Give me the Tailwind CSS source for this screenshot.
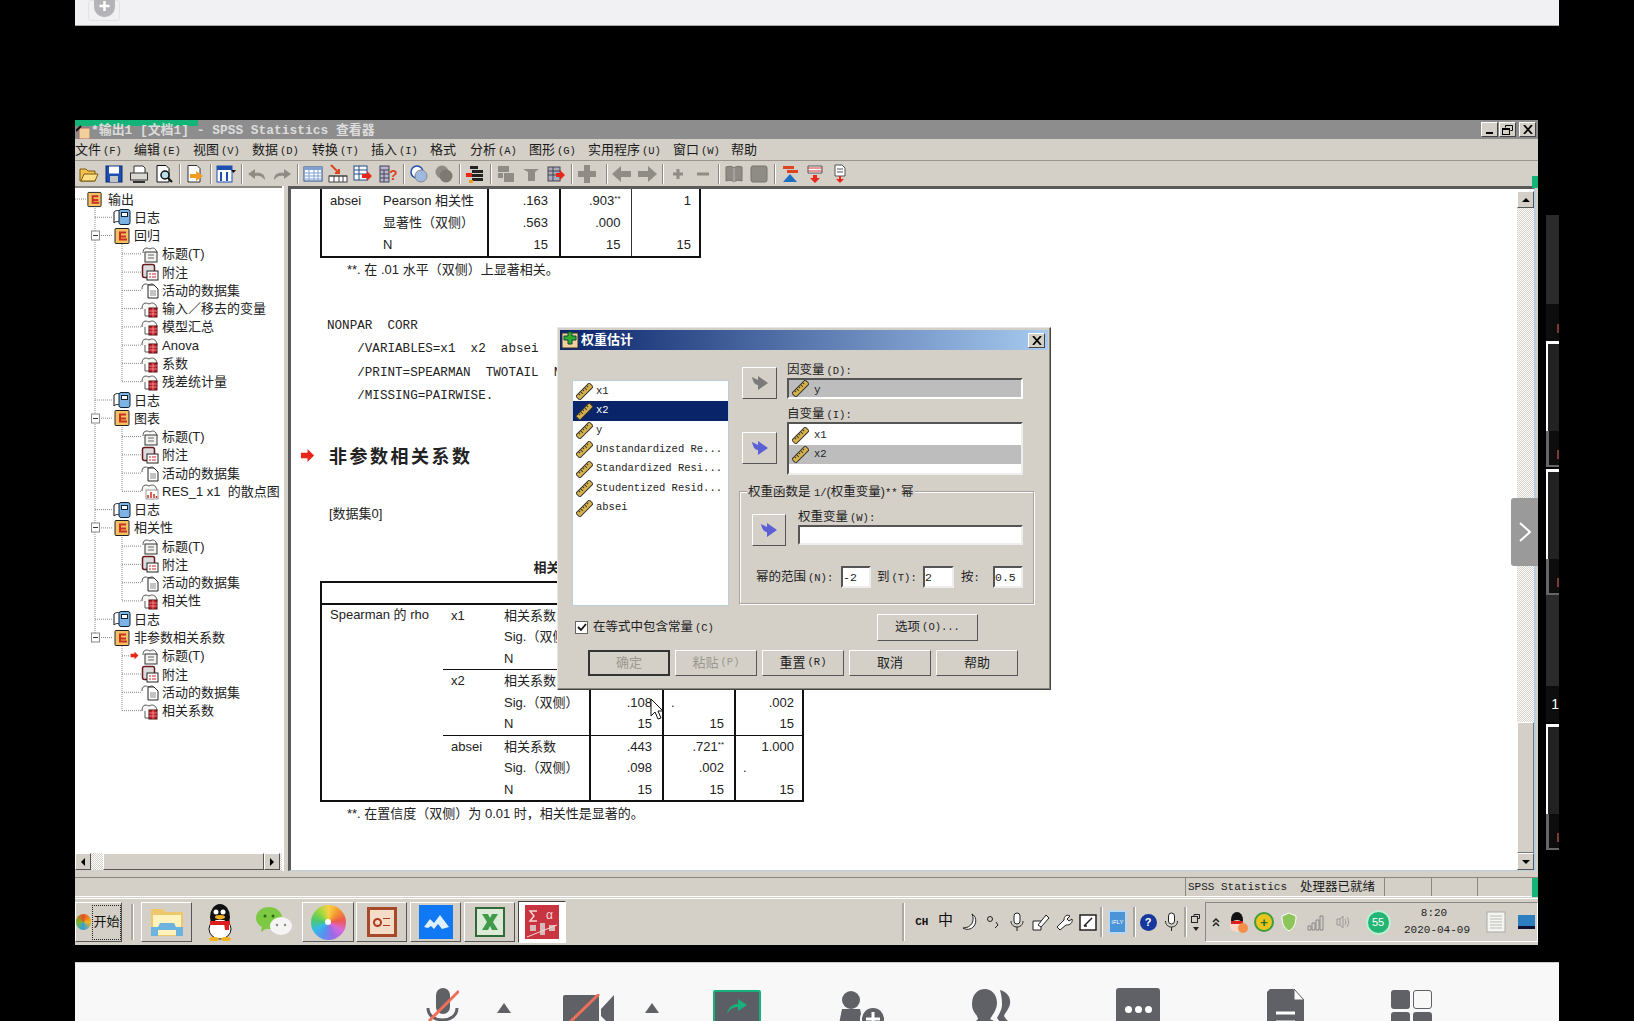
<!DOCTYPE html>
<html lang="zh">
<head>
  <meta charset="UTF-8" />
  <title>SPSS Statistics 查看器</title>
  <script src="https://cdn.jsdelivr.net/npm/@tailwindcss/browser@4"></script>
</head>
<body class="bg-black w-[1634px] h-[1021px] overflow-hidden font-['Liberation_Sans','Noto_Sans_CJK_SC',sans-serif] text-[13px] text-[#222]">

  <!-- shared icons -->
  <svg class="hidden">
    <symbol id="log" viewBox="0 0 18 18"><path d="M1 4c2-2 5-2 6 0v11c-1-2-4-2-6 0z" fill="#fff" stroke="#111"/><rect x="6" y="1.5" width="11" height="15" rx="2" fill="#7db4e6" stroke="#123"/><rect x="8.5" y="4.5" width="6" height="4" fill="#fff" stroke="#123"/></symbol>
    <symbol id="out" viewBox="0 0 18 18"><rect x="2" y="1.5" width="14" height="15" rx="1" fill="#f5c063" stroke="#222"/><path d="M6 4.500h7v2H8v2h5v2H8v1h6v2H6z" fill="#c8301f"/></symbol>
    <symbol id="ttl" viewBox="0 0 18 18"><path d="M2 8c0-5 3-6 7-4 3-2 6-1 7 4" fill="#fff" stroke="#555"/><rect x="4" y="7" width="12" height="10" fill="#f2f2ee" stroke="#333"/><path d="M7 10h6M7 13h6" stroke="#666"/></symbol>
    <symbol id="nte" viewBox="0 0 18 18"><rect x="1.500" y="1.500" width="12" height="13" rx="2" fill="#ddd" stroke="#6a1a1a" stroke-width="1.500"/><rect x="6" y="8" width="11" height="9" fill="#fff" stroke="#222"/><path d="M8 11h2M8 14h2M11 11h4M11 14h4" stroke="#c22"/></symbol>
    <symbol id="dst" viewBox="0 0 18 18"><path d="M1 8c0-5 3-6 7-4 3-2 5-1 6 2" fill="#fff" stroke="#555"/><path d="M7 4h6l4 4v9H7z" fill="#fff" stroke="#222"/><path d="M9 10h6M9 12h6M9 14h6" stroke="#888"/></symbol>
    <symbol id="tbl" viewBox="0 0 18 18"><path d="M1 9c0-6 3-7 7-5 3-2 7-1 8 4v1" fill="#f6f6f2" stroke="#555"/><path d="M4 9v7h5" fill="#fff" stroke="#555"/><rect x="8" y="8" width="8" height="9" fill="#c0202a" stroke="#511"/><path d="M8 11h8M8 14h8M12 8v9" stroke="#fbb" stroke-width=".6"/></symbol>
    <symbol id="cht" viewBox="0 0 18 18"><path d="M1 9c0-6 3-7 7-5 3-2 7-1 8 4v1" fill="#f6f6f2" stroke="#555"/><rect x="5" y="8" width="12" height="9" fill="#fff" stroke="#999"/><path d="M7 16v-3M10 16v-6M13 16v-4M15.500 16v-2" stroke="#c8301f" stroke-width="1.500"/></symbol>
    <symbol id="rul" viewBox="0 0 18 18"><g transform="rotate(-45 9 9)"><rect x="-1" y="6" width="20" height="6" fill="#d8b34a" stroke="#333"/><path d="M3 6v2.500M6 6v3.500M9 6v2.500M12 6v3.500M15 6v2.500" stroke="#333"/></g></symbol>
    <symbol id="arw" viewBox="0 0 20 20"><path d="M2 4l6 3V3l10 7-10 7v-5C5 12 3 9 2 4z"/></symbol>
    <symbol id="red" viewBox="0 0 16 16"><path d="M1 5h7V1l7 7-7 7v-4H1z" fill="#e8261a"/></symbol>
    <symbol id="bok" viewBox="0 0 20 20"><path d="M2 3c3-1 6-1 8 1 2-2 5-2 8-1v14c-3-1-6-1-8 1-2-2-5-2-8-1z" fill="#8f8c85" stroke="#77746e"/><path d="M10 4v14" stroke="#bbb"/></symbol>
    <symbol id="bk2" viewBox="0 0 20 20"><rect x="2" y="2" width="16" height="16" rx="2" fill="#8f8c85" stroke="#77746e"/></symbol>
  </svg>

  <!-- top bar of the meeting client -->
  <div class="ml-[75px] w-[1484px] h-[26px] bg-[#f1f1f3] border-b border-[#aaa] overflow-hidden">
    <div class="ml-[13px] w-[32px] h-[21px] border border-[#e2e2e4] rounded-[3px] flex justify-center items-end pb-[2px]">
      <svg class="w-[21px] h-[26px]" viewBox="0 0 21 26"><path d="M0 0h21v14c0 7-5 11-10.500 11S0 21 0 14z" fill="#b4b4b8"/><path d="M10.500 9v10M5.500 14h10" stroke="#fff" stroke-width="2.500"/></svg>
    </div>
  </div>

  <div class="flex items-start pl-[75px] mt-[94px]">

    <!-- SPSS window -->
    <div class="relative w-[1463px] h-[825px] bg-[#d4d0c8] flex flex-col">

      <!-- title bar -->
      <div class="relative h-[19px] bg-[#8d8d8d] flex items-center">
        <div class="absolute left-0 top-0 w-[123px] h-[6px] bg-[#14b478]"></div>
        <svg class="relative w-[14px] h-[14px] mt-[4px] ml-px" viewBox="0 0 14 14"><rect x="3" y="3" width="11" height="11" fill="#f3cf9c" stroke="#a66"/><path d="M0 6l5-5" stroke="#111" stroke-width="2"/></svg>
        <span class="relative ml-px mt-[3px] font-bold font-['Liberation_Mono','Noto_Sans_CJK_SC',monospace] text-[12.900px] text-[#dcdcdc] whitespace-pre">*输出1 [文档1] - SPSS Statistics 查看器</span>
        <div class="ml-auto mr-[2px] flex">
          <div class="w-[17px] h-[15px] bg-[#d4d0c8] border border-t-white border-l-white border-r-[#444] border-b-[#444] flex justify-center items-end pb-[2px]"><div class="w-[7px] h-[2px] bg-black"></div></div>
          <div class="w-[17px] h-[15px] ml-px bg-[#d4d0c8] border border-t-white border-l-white border-r-[#444] border-b-[#444] flex justify-center items-center"><svg class="w-[11px] h-[10px]" viewBox="0 0 11 10" fill="none" stroke="#000"><path d="M3.500 2.500v-2h7v5h-2"/><rect x=".5" y="3.500" width="7" height="6"/><path d="M1 4.500h6" /></svg></div>
          <div class="w-[17px] h-[15px] ml-[3px] bg-[#d4d0c8] border border-t-white border-l-white border-r-[#444] border-b-[#444] flex justify-center items-center"><svg class="w-[10px] h-[9px]" viewBox="0 0 10 9" stroke="#000" stroke-width="1.800"><path d="M1 0l8 9M9 0l-8 9"/></svg></div>
        </div>
      </div>

      <!-- menu -->
      <div class="h-[22px] flex items-center text-[13px] text-[#1a1a1a] border-b border-[#9a968e]">
        <span class="w-[59px]">文件<span class="ml-[2px] text-[10.500px] font-['Liberation_Mono']">(F)</span></span>
        <span class="w-[59px]">编辑<span class="ml-[2px] text-[10.500px] font-['Liberation_Mono']">(E)</span></span>
        <span class="w-[59px]">视图<span class="ml-[2px] text-[10.500px] font-['Liberation_Mono']">(V)</span></span>
        <span class="w-[60px]">数据<span class="ml-[2px] text-[10.500px] font-['Liberation_Mono']">(D)</span></span>
        <span class="w-[59px]">转换<span class="ml-[2px] text-[10.500px] font-['Liberation_Mono']">(T)</span></span>
        <span class="w-[59px]">插入<span class="ml-[2px] text-[10.500px] font-['Liberation_Mono']">(I)</span></span>
        <span class="w-[40px]">格式</span>
        <span class="w-[59px]">分析<span class="ml-[2px] text-[10.500px] font-['Liberation_Mono']">(A)</span></span>
        <span class="w-[59px]">图形<span class="ml-[2px] text-[10.500px] font-['Liberation_Mono']">(G)</span></span>
        <span class="w-[85px]">实用程序<span class="ml-[2px] text-[10.500px] font-['Liberation_Mono']">(U)</span></span>
        <span class="w-[58px]">窗口<span class="ml-[2px] text-[10.500px] font-['Liberation_Mono']">(W)</span></span>
        <span>帮助</span>
      </div>

      <!-- toolbar -->
      <div class="relative h-[25px] flex items-center gap-[5px] pl-[4px]">
        <svg class="w-5 h-5" viewBox="0 0 20 20"><path d="M1 5h6l2 2h7v10H1z" fill="#f3c14f" stroke="#7a5a10"/><path d="M2 17l3-7h14l-3 7z" fill="#ffe08a" stroke="#7a5a10"/></svg>
        <svg class="w-5 h-5" viewBox="0 0 20 20"><rect x="2" y="2" width="16" height="16" fill="#1d4fb0" stroke="#0a2a70"/><rect x="5" y="2.500" width="10" height="7" fill="#fff"/><rect x="6" y="12" width="8" height="6" fill="#c4c4c4"/></svg>
        <svg class="w-5 h-5" viewBox="0 0 20 20"><path d="M5 9V2h9l2 2v5" fill="#fff" stroke="#333"/><rect x="1.500" y="9" width="17" height="7" fill="#d8d8d0" stroke="#333"/><path d="M4 18h12" stroke="#333" stroke-width="2"/></svg>
        <svg class="w-5 h-5" viewBox="0 0 20 20"><path d="M3 1.500h9l3 3V18H3z" fill="#fff" stroke="#111"/><circle cx="11" cy="11" r="4" fill="#bde" stroke="#111" stroke-width="1.500"/><path d="M14 14l4 4" stroke="#111" stroke-width="2"/></svg>
        <div class="w-px h-[20px] bg-[#8a877f] shadow-[1px_0_0_#fff]"></div>
        <svg class="w-5 h-5" viewBox="0 0 20 20"><path d="M3 1.500h9l3 3V18H3z" fill="#fff" stroke="#333"/><path d="M5 10h6V7l7 5-7 5v-3H5z" fill="#f59a23"/></svg>
        <div class="w-px h-[20px] bg-[#8a877f] shadow-[1px_0_0_#fff]"></div>
        <svg class="w-5 h-5" viewBox="0 0 20 20"><rect x="1" y="2" width="15" height="16" fill="#fff" stroke="#1d4fb0"/><rect x="1" y="2" width="15" height="4" fill="#1d4fb0"/><path d="M5 8v9M11 8v9" stroke="#1d4fb0" stroke-width="2"/><path d="M15 6h5l-2.500 3z" fill="#111"/></svg>
        <div class="w-px h-[20px] bg-[#8a877f] shadow-[1px_0_0_#fff]"></div>
        <svg class="w-5 h-5" viewBox="0 0 20 20"><path d="M18 16c0-6-4-8-10-7V5L1 10l7 5v-3c4-1 7 0 10 4z" fill="#8f8c85"/></svg>
        <svg class="w-5 h-5" viewBox="0 0 20 20"><path d="M2 16c0-6 4-8 10-7V5l7 5-7 5v-3c-4-1-7 0-10 4z" fill="#8f8c85"/></svg>
        <div class="w-px h-[20px] bg-[#8a877f] shadow-[1px_0_0_#fff]"></div>
        <svg class="w-5 h-5" viewBox="0 0 20 20"><rect x="1" y="3" width="18" height="14" fill="#fff" stroke="#234a8a"/><rect x="1" y="3" width="18" height="3" fill="#7f9fd0"/><path d="M1 9h18M1 12h18M1 15h18M6 6v11M11 6v11M15 6v11" stroke="#7f9fd0"/></svg>
        <svg class="w-5 h-5" viewBox="0 0 20 20"><path d="M3 1l8 8M7 9h4V5" stroke="#d42" stroke-width="2" fill="none"/><rect x="1" y="12" width="18" height="6" fill="#fff" stroke="#444"/><path d="M1 12h18M6 12v6M11 12v6M15 12v6" stroke="#444"/></svg>
        <svg class="w-5 h-5" viewBox="0 0 20 20"><rect x="1" y="2" width="13" height="14" fill="#fff" stroke="#234a8a"/><path d="M1 6h13M1 10h13M6 2v14" stroke="#234a8a"/><path d="M9 10h5V7l5 5-5 5v-3H9z" fill="#e8261a"/></svg>
        <svg class="w-5 h-5" viewBox="0 0 20 20"><rect x="2" y="2" width="9" height="16" fill="#b9b6cf" stroke="#445"/><path d="M2 6h9M2 10h9M2 14h9M6 6v12" stroke="#445"/><text x="11" y="16" font-size="14" font-weight="700" fill="#d42">?</text></svg>
        <div class="w-px h-[20px] bg-[#8a877f] shadow-[1px_0_0_#fff]"></div>
        <svg class="w-5 h-5" viewBox="0 0 20 20"><circle cx="8" cy="8" r="6" fill="#fff" stroke="#1d4fb0" stroke-width="1.500"/><circle cx="12" cy="12" r="6" fill="#9fb9e0" stroke="#888"/></svg>
        <svg class="w-5 h-5" viewBox="0 0 20 20"><circle cx="8" cy="8" r="6.500" fill="#8f8c85"/><circle cx="12" cy="12" r="6.500" fill="#7d7a74"/></svg>
        <div class="w-px h-[20px] bg-[#8a877f] shadow-[1px_0_0_#fff]"></div>
        <svg class="w-5 h-5" viewBox="0 0 20 20"><path d="M5 2h8v3H5zM7 6h11v3H7zM7 10h11v3H7zM7 14h11v3H7z" fill="#222"/><path d="M1 9h6v4H1z" fill="#e8261a"/><path d="M4 16h4v3H4z" fill="#e8a023"/></svg>
        <div class="w-px h-[20px] bg-[#8a877f] shadow-[1px_0_0_#fff]"></div>
        <svg class="w-5 h-5" viewBox="0 0 20 20" fill="#8f8c85"><path d="M2 2h11v6H2zM8 9h10v9H8zM2 9h5v5H2z"/></svg>
        <svg class="w-5 h-5" viewBox="0 0 20 20" fill="#8f8c85"><path d="M2 5h16l-4 3v9H7V8z"/></svg>
        <svg class="w-5 h-5" viewBox="0 0 20 20"><rect x="2" y="3" width="12" height="14" fill="#aab" stroke="#445"/><path d="M2 7h12M2 11h12M7 3v14" stroke="#445"/><path d="M10 9h4V6l5 5-5 5v-3h-4z" fill="#e8261a"/></svg>
        <div class="w-px h-[20px] bg-[#8a877f] shadow-[1px_0_0_#fff]"></div>
        <svg class="w-5 h-5" viewBox="0 0 20 20"><path d="M7 1h6v6h6v6h-6v6H7v-6H1V7h6z" fill="#8f8c85"/></svg>
        <div class="w-px h-[20px] ml-[4px] bg-[#8a877f] shadow-[1px_0_0_#fff]"></div>
        <svg class="w-5 h-5" viewBox="0 0 20 20"><path d="M9 2v5h10v6H9v5L0 10z" fill="#8f8c85"/></svg>
        <svg class="w-5 h-5" viewBox="0 0 20 20"><path d="M11 2v5H1v6h10v5l9-8z" fill="#8f8c85"/></svg>
        <div class="w-px h-[20px] bg-[#8a877f] shadow-[1px_0_0_#fff]"></div>
        <svg class="w-5 h-5" viewBox="0 0 20 20"><path d="M10 5v10M5 10h10" stroke="#8f8c85" stroke-width="3"/></svg>
        <svg class="w-5 h-5" viewBox="0 0 20 20"><path d="M4 10h12" stroke="#8f8c85" stroke-width="3"/></svg>
        <div class="w-px h-[20px] bg-[#8a877f] shadow-[1px_0_0_#fff]"></div>
        <svg class="w-5 h-5"><use href="#bok"/></svg>
        <svg class="w-5 h-5"><use href="#bk2"/></svg>
        <div class="w-px h-[20px] bg-[#8a877f] shadow-[1px_0_0_#fff]"></div>
        <svg class="w-5 h-5" viewBox="0 0 20 20"><path d="M3 2h11v3H3z" fill="#d42"/><path d="M7 6h11v3H7z" fill="#d42"/><path d="M10 10l7 8H3z" fill="#1d6fc0"/></svg>
        <svg class="w-5 h-5" viewBox="0 0 20 20"><path d="M3 2h14v7H3z" fill="#fff" stroke="#555"/><path d="M3 4h14M3 7h14" stroke="#c33"/><path d="M8 11h4v3h3l-5 5-5-5h3z" fill="#e8261a"/></svg>
        <svg class="w-5 h-5" viewBox="0 0 20 20"><path d="M5 1h7l3 3v8H5z" fill="#fff" stroke="#555"/><path d="M7 5h6M7 8h6" stroke="#555"/><path d="M9 12h2v3h3l-4 4-4-4h3z" fill="#e8261a"/></svg>
        <div class="absolute right-0 top-[15px] w-[6px] h-[12px] bg-[#14b478]"></div>
      </div>

      <!-- panes -->
      <div class="flex h-[691px]">

        <!-- outline tree -->
        <div class="relative w-[207px] flex flex-col">
          <div class="flex-1 bg-white border-t-2 border-[#8a877f] pt-[2px] text-[13px] leading-none whitespace-nowrap">
            <div class="flex items-center h-[18.270px] pl-[11px]"><svg class="w-[17px] h-[17px] mr-[5px]"><use href="#out"/></svg>输出</div>
            <div class="flex items-center h-[18.270px] pl-[38px]"><svg class="w-[18px] h-[18px] mr-[3px]"><use href="#log"/></svg>日志</div>
            <div class="flex items-center h-[18.270px] pl-[38px]"><svg class="w-[18px] h-[18px] mr-[3px]"><use href="#out"/></svg>回归</div>
            <div class="flex items-center h-[18.270px] pl-[66px]"><svg class="w-[18px] h-[18px] mr-[3px]"><use href="#ttl"/></svg>标题(T)</div>
            <div class="flex items-center h-[18.270px] pl-[66px]"><svg class="w-[18px] h-[18px] mr-[3px]"><use href="#nte"/></svg>附注</div>
            <div class="flex items-center h-[18.270px] pl-[66px]"><svg class="w-[18px] h-[18px] mr-[3px]"><use href="#dst"/></svg>活动的数据集</div>
            <div class="flex items-center h-[18.270px] pl-[66px]"><svg class="w-[18px] h-[18px] mr-[3px]"><use href="#tbl"/></svg>输入／移去的变量</div>
            <div class="flex items-center h-[18.270px] pl-[66px]"><svg class="w-[18px] h-[18px] mr-[3px]"><use href="#tbl"/></svg>模型汇总</div>
            <div class="flex items-center h-[18.270px] pl-[66px]"><svg class="w-[18px] h-[18px] mr-[3px]"><use href="#tbl"/></svg>Anova</div>
            <div class="flex items-center h-[18.270px] pl-[66px]"><svg class="w-[18px] h-[18px] mr-[3px]"><use href="#tbl"/></svg>系数</div>
            <div class="flex items-center h-[18.270px] pl-[66px]"><svg class="w-[18px] h-[18px] mr-[3px]"><use href="#tbl"/></svg>残差统计量</div>
            <div class="flex items-center h-[18.270px] pl-[38px]"><svg class="w-[18px] h-[18px] mr-[3px]"><use href="#log"/></svg>日志</div>
            <div class="flex items-center h-[18.270px] pl-[38px]"><svg class="w-[18px] h-[18px] mr-[3px]"><use href="#out"/></svg>图表</div>
            <div class="flex items-center h-[18.270px] pl-[66px]"><svg class="w-[18px] h-[18px] mr-[3px]"><use href="#ttl"/></svg>标题(T)</div>
            <div class="flex items-center h-[18.270px] pl-[66px]"><svg class="w-[18px] h-[18px] mr-[3px]"><use href="#nte"/></svg>附注</div>
            <div class="flex items-center h-[18.270px] pl-[66px]"><svg class="w-[18px] h-[18px] mr-[3px]"><use href="#dst"/></svg>活动的数据集</div>
            <div class="flex items-center h-[18.270px] pl-[66px]"><svg class="w-[18px] h-[18px] mr-[3px]"><use href="#cht"/></svg>RES_1 x1&nbsp; 的散点图</div>
            <div class="flex items-center h-[18.270px] pl-[38px]"><svg class="w-[18px] h-[18px] mr-[3px]"><use href="#log"/></svg>日志</div>
            <div class="flex items-center h-[18.270px] pl-[38px]"><svg class="w-[18px] h-[18px] mr-[3px]"><use href="#out"/></svg>相关性</div>
            <div class="flex items-center h-[18.270px] pl-[66px]"><svg class="w-[18px] h-[18px] mr-[3px]"><use href="#ttl"/></svg>标题(T)</div>
            <div class="flex items-center h-[18.270px] pl-[66px]"><svg class="w-[18px] h-[18px] mr-[3px]"><use href="#nte"/></svg>附注</div>
            <div class="flex items-center h-[18.270px] pl-[66px]"><svg class="w-[18px] h-[18px] mr-[3px]"><use href="#dst"/></svg>活动的数据集</div>
            <div class="flex items-center h-[18.270px] pl-[66px]"><svg class="w-[18px] h-[18px] mr-[3px]"><use href="#tbl"/></svg>相关性</div>
            <div class="flex items-center h-[18.270px] pl-[38px]"><svg class="w-[18px] h-[18px] mr-[3px]"><use href="#log"/></svg>日志</div>
            <div class="flex items-center h-[18.270px] pl-[38px]"><svg class="w-[18px] h-[18px] mr-[3px]"><use href="#out"/></svg>非参数相关系数</div>
            <div class="flex items-center h-[18.270px] pl-[66px]"><svg class="w-[18px] h-[18px] mr-[3px]"><use href="#ttl"/></svg>标题(T)</div>
            <div class="flex items-center h-[18.270px] pl-[66px]"><svg class="w-[18px] h-[18px] mr-[3px]"><use href="#nte"/></svg>附注</div>
            <div class="flex items-center h-[18.270px] pl-[66px]"><svg class="w-[18px] h-[18px] mr-[3px]"><use href="#dst"/></svg>活动的数据集</div>
            <div class="flex items-center h-[18.270px] pl-[66px]"><svg class="w-[18px] h-[18px] mr-[3px]"><use href="#tbl"/></svg>相关系数</div>
          </div>
          <!-- connector lines over the rows -->
          <svg class="absolute left-0 top-0 w-[100px] h-[560px] pointer-events-none" viewBox="0 0 100 560" fill="none">
            <path stroke="#8b8b8b" stroke-dasharray="1 1" d="M20 22V451.500M0 13H12M20 31.300H38M20 49.500H38M20 214H38M20 232.200H38M20 323.600H38M20 341.900H38M20 433.200H38M20 451.500H38M47 58V195.700M47 67.800H66M47 86.100H66M47 104.400H66M47 122.600H66M47 140.900H66M47 159.200H66M47 177.400H66M47 195.700H66M47 241V305.300M47 250.500H66M47 268.800H66M47 287.100H66M47 305.300H66M47 351V414.900M47 360.100H66M47 378.400H66M47 396.700H66M47 414.900H66M47 460V524.600M47 469.800H54M47 488H66M47 506.300H66M47 524.600H66"/>
            <g fill="#fff" stroke="#888"><rect x="16.500" y="45" width="8" height="9"/><rect x="16.500" y="228" width="8" height="9"/><rect x="16.500" y="337" width="8" height="9"/><rect x="16.500" y="447" width="8" height="9"/></g>
            <path stroke="#333" d="M18 49.500h5M18 232.500h5M18 341.500h5M18 451.500h5"/>
            <use href="#red" x="55" y="465" width="9" height="9"/>
          </svg>
          <!-- horizontal scrollbar -->
          <div class="h-[17px] flex bg-[repeating-conic-gradient(#fff_0_25%,#d4d0c8_0_50%)] bg-[length:2px_2px]">
            <div class="w-[16px] bg-[#d4d0c8] border border-t-white border-l-white border-r-[#555] border-b-[#555] flex justify-center items-center"><div class="border-y-[4px] border-y-transparent border-r-[4px] border-r-black"></div></div>
            <div class="w-[12px]"></div>
            <div class="w-[161px] bg-[#d4d0c8] border border-t-white border-l-white border-r-[#555] border-b-[#555]"></div>
            <div class="w-[16px] bg-[#d4d0c8] border border-t-white border-l-white border-r-[#555] border-b-[#555] flex justify-center items-center"><div class="border-y-[4px] border-y-transparent border-l-[4px] border-l-black"></div></div>
          </div>
          <div class="h-[7px]"></div>
        </div>

        <div class="w-[6px] h-[685px] border-l-2 border-white"></div>

        <!-- output pane -->
        <div class="w-[1248px] h-[685px] flex border-l-[3px] border-t-[3px] border-[#5a5a5a] border-b border-b-[#b9d0dc] border-r-2 border-r-[#b9d0dc] bg-white">
          <div class="w-[1226px] pl-[29px] overflow-hidden">
            <table class="table-fixed border-collapse w-[379px] [&_td]:h-[22.500px] border-b-2 border-x-2 border-[#111]">
              <tr><td class="w-[53px] pl-[8px]">absei</td><td class="w-[114px] pl-[9px]">Pearson 相关性</td><td class="w-[72px] text-right pr-[11px] border-l-2 border-[#111]">.163</td><td class="w-[71px] text-right pr-[10px] border-l-2 border-[#111]">.903<sup class="text-[8px] leading-none">**</sup></td><td class="w-[69px] text-right pr-[8px] border-l border-[#333]">1</td></tr>
              <tr><td></td><td class="pl-[9px]">显著性（双侧）</td><td class="text-right pr-[11px] border-l-2 border-[#111]">.563</td><td class="text-right pr-[10px] border-l-2 border-[#111]">.000</td><td class="border-l border-[#333]"></td></tr>
              <tr><td></td><td class="pl-[9px]">N</td><td class="text-right pr-[11px] border-l-2 border-[#111]">15</td><td class="text-right pr-[10px] border-l-2 border-[#111]">15</td><td class="text-right pr-[8px] border-l border-[#333]">15</td></tr>
            </table>
            <p class="mt-[3px] ml-[27px] leading-[18px]">**. 在 .01 水平（双侧）上显著相关。</p>

            <pre class="mt-[36px] ml-[7px] font-['Liberation_Mono',monospace] text-[12.600px] leading-[23.600px] text-[#222]">NONPAR  CORR
    /VARIABLES=x1  x2  absei
    /PRINT=SPEARMAN  TWOTAIL  NOSIG
    /MISSING=PAIRWISE.</pre>

            <div class="mt-[33px] -ml-[20px] h-[28px] flex items-center">
              <svg class="w-[15px] h-[15px]"><use href="#red"/></svg>
              <h2 class="ml-[14px] text-[18px] font-bold tracking-[2.500px] text-[#222] font-['Noto_Sans_CJK_SC',sans-serif]">非参数相关系数</h2>
            </div>
            <p class="mt-[35px] ml-[9px] leading-[18px]">[数据集0]</p>

            <p class="mt-[36px] w-[466px] text-center font-bold leading-[18px]">相关性</p>
            <table class="mt-[4px] table-fixed border-collapse w-[482px] [&_td]:h-[21.900px] border-2 border-[#111]">
              <tr class="border-b-2 border-[#111]"><td class="!h-[22px] w-[122px]"></td><td class="w-[60px]"></td><td class="w-[87px]"></td><td class="w-[73px] border-l-2 border-[#111]"></td><td class="w-[72px] border-l-2 border-[#111]"></td><td class="w-[68px] border-l-2 border-[#111]"></td></tr>
              <tr><td rowspan="9" class="pl-[8px] align-top">Spearman 的 rho</td><td class="pl-[8px]">x1</td><td class="pl-px">相关系数</td><td class="border-l-2 border-[#111]"></td><td class="border-l-2 border-[#111]"></td><td class="border-l-2 border-[#111]"></td></tr>
              <tr><td></td><td class="pl-px">Sig.（双侧）</td><td class="border-l-2 border-[#111]"></td><td class="border-l-2 border-[#111]"></td><td class="border-l-2 border-[#111]"></td></tr>
              <tr><td></td><td class="pl-px">N</td><td class="border-l-2 border-[#111]"></td><td class="border-l-2 border-[#111]"></td><td class="border-l-2 border-[#111]"></td></tr>
              <tr class="border-t border-[#111]"><td class="pl-[8px]">x2</td><td class="pl-px">相关系数</td><td class="border-l-2 border-[#111]"></td><td class="border-l-2 border-[#111]"></td><td class="border-l-2 border-[#111]"></td></tr>
              <tr><td></td><td class="pl-px">Sig.（双侧）</td><td class="text-right pr-[10px] border-l-2 border-[#111]">.108</td><td class="pl-[7px] border-l-2 border-[#111]">.</td><td class="text-right pr-[8px] border-l-2 border-[#111]">.002</td></tr>
              <tr><td></td><td class="pl-px">N</td><td class="text-right pr-[10px] border-l-2 border-[#111]">15</td><td class="text-right pr-[10px] border-l-2 border-[#111]">15</td><td class="text-right pr-[8px] border-l-2 border-[#111]">15</td></tr>
              <tr class="border-t border-[#111]"><td class="pl-[8px]">absei</td><td class="pl-px">相关系数</td><td class="text-right pr-[10px] border-l-2 border-[#111]">.443</td><td class="text-right pr-[10px] border-l-2 border-[#111]">.721<sup class="text-[8px] leading-none">**</sup></td><td class="text-right pr-[8px] border-l-2 border-[#111]">1.000</td></tr>
              <tr><td></td><td class="pl-px">Sig.（双侧）</td><td class="text-right pr-[10px] border-l-2 border-[#111]">.098</td><td class="text-right pr-[10px] border-l-2 border-[#111]">.002</td><td class="pl-[7px] border-l-2 border-[#111]">.</td></tr>
              <tr><td></td><td class="pl-px">N</td><td class="text-right pr-[10px] border-l-2 border-[#111]">15</td><td class="text-right pr-[10px] border-l-2 border-[#111]">15</td><td class="text-right pr-[8px] border-l-2 border-[#111]">15</td></tr>
            </table>
            <p class="mt-[3px] ml-[27px] leading-[18px]">**. 在置信度（双侧）为 0.01 时，相关性是显著的。</p>
          </div>

          <!-- vertical scrollbar -->
          <div class="w-[17px] pt-[2px] flex flex-col">
            <div class="h-[17px] bg-[#d4d0c8] border border-t-white border-l-white border-r-[#555] border-b-[#555] flex justify-center items-center"><div class="border-x-[4px] border-x-transparent border-b-[4px] border-b-black"></div></div>
            <div class="flex-1 bg-[repeating-conic-gradient(#fff_0_25%,#d4d0c8_0_50%)] bg-[length:2px_2px]"></div>
            <div class="h-[131px] bg-[#d4d0c8] border border-t-white border-l-white border-r-[#777] border-b-[#777]"></div>
            <div class="h-[17px] bg-[#d4d0c8] border border-t-white border-l-white border-r-[#555] border-b-[#555] flex justify-center items-center"><div class="border-x-[4px] border-x-transparent border-t-[4px] border-t-black"></div></div>
          </div>
        </div>
      </div>

      <!-- status bar -->
      <div class="relative h-[19px] flex border-t border-[#8a877f] shadow-[0_1px_0_#fff] text-[#1a1a1a]">
        <div class="ml-[1110px] w-[200px] border-x border-[#8a877f] flex items-center pl-[2px] whitespace-pre"><span class="font-['Liberation_Mono',monospace] text-[11px]">SPSS Statistics</span><span class="ml-[13px] text-[12.500px]">处理器已就绪</span></div>
        <div class="w-[47px] border-r border-[#8a877f]"></div>
        <div class="w-[46px] border-r border-[#8a877f]"></div>
        <div class="absolute right-0 top-0 w-[6px] h-[19px] bg-[#14b478]"></div>
      </div>

      <!-- taskbar -->
      <div class="mt-[2px] h-[47px] flex items-center border-t border-white text-[#111]">
        <div class="w-[47px] h-[40px] bg-[#d4d0c8] border border-r-[#555] border-b-[#555] border-t-white border-l-white flex items-center">
          <div class="w-[15px] h-[16px] rounded-full bg-[conic-gradient(#e8501f,#f3b71c,#2f9fe0,#7ab92e,#e8501f)]"></div>
          <div class="ml-px w-[29px] h-[35px] border border-dotted border-[#222] flex items-center justify-center text-[13px] whitespace-nowrap">开始</div>
        </div>
        <div class="ml-[9px] w-[2px] h-[36px] bg-[#aaa7a0] shadow-[1px_0_0_#fff]"></div>
        <div class="ml-[8px] w-[51px] h-[40px] bg-[#d4d0c8] border border-t-white border-l-white border-r-[#555] border-b-[#555] flex items-center justify-center">
          <svg class="w-[36px] h-[34px]" viewBox="0 0 36 34"><path d="M2 4h12l3 3h17v24H2z" fill="#eec86c"/><rect x="4" y="10" width="28" height="20" fill="#fff2bd"/><path d="M2 31V22h7l2-4h14l2 4h7v9h-7v-6H9v6z" fill="#6db3df"/></svg>
        </div>
        <svg class="ml-[13px] w-[30px] h-[38px]" viewBox="0 0 30 38"><ellipse cx="15" cy="14" rx="10" ry="13" fill="#111"/><ellipse cx="15" cy="26" rx="11" ry="10" fill="#fff" stroke="#111"/><rect x="5" y="18" width="20" height="4" fill="#d9201f"/><path d="M19 20h5v7h-4z" fill="#d9201f"/><circle cx="11" cy="9" r="2.500" fill="#fff"/><circle cx="18" cy="9" r="2.500" fill="#fff"/><ellipse cx="15" cy="14" rx="5" ry="2" fill="#f5b21f"/><ellipse cx="9" cy="36" rx="5" ry="2" fill="#f5b21f"/><ellipse cx="21" cy="36" rx="5" ry="2" fill="#f5b21f"/></svg>
        <svg class="ml-[20px] w-[37px] h-[32px]" viewBox="0 0 37 32"><ellipse cx="14" cy="12" rx="13" ry="11" fill="#7dc943"/><path d="M7 20l-1 6 6-4z" fill="#7dc943"/><circle cx="10" cy="10" r="1.500" fill="#2e6a12"/><circle cx="18" cy="10" r="1.500" fill="#2e6a12"/><ellipse cx="26" cy="20" rx="11" ry="9" fill="#f4f4f2"/><circle cx="22" cy="19" r="1.200" fill="#888"/><circle cx="30" cy="19" r="1.200" fill="#888"/></svg>
        <div class="ml-[10px] w-[52px] h-[40px] bg-[#d4d0c8] border border-t-white border-l-white border-r-[#555] border-b-[#555] flex items-center justify-center">
          <div class="w-[35px] h-[35px] rounded-full bg-[conic-gradient(#f7d046,#f59a2f,#ec5a4c,#d968d8,#9a6be8,#5a8fee,#37b8ec,#4cc96d,#9ad83f,#f7d046)] flex items-center justify-center"><div class="w-[6px] h-[6px] rounded-full bg-white"></div></div>
        </div>
        <div class="ml-[2px] w-[51px] h-[40px] bg-[#d4d0c8] border border-t-white border-l-white border-r-[#555] border-b-[#555] flex items-center justify-center">
          <div class="w-[30px] h-[30px] border-[3px] border-[#a8492a] bg-[#f3dcc8] flex items-center justify-center"><div class="w-[9px] h-[9px] rounded-full border-2 border-[#b03a20]"></div><div class="ml-px w-[7px] h-[8px] border-y border-[#b03a20]"></div></div>
        </div>
        <div class="ml-[3px] w-[51px] h-[40px] bg-[#d4d0c8] border border-t-white border-l-white border-r-[#555] border-b-[#555] flex items-center justify-center">
          <svg class="w-[34px] h-[34px]" viewBox="0 0 34 34"><rect width="34" height="34" fill="#0f78f2"/><path d="M5 22l6-8 4 4 6-8 9 12-7 2-4-5-4 5-3-3-3 2z" fill="#dff1ff"/></svg>
        </div>
        <div class="ml-[3px] w-[51px] h-[40px] bg-[#d4d0c8] border border-t-white border-l-white border-r-[#555] border-b-[#555] flex items-center justify-center">
          <svg class="w-[30px] h-[30px]" viewBox="0 0 30 30"><rect x="1" y="1" width="28" height="28" fill="#dcebd8" stroke="#2f6a38" stroke-width="2"/><path d="M7 7h6l2 4 2-4h6l-5 8 5 8h-6l-2-4-2 4H7l5-8z" fill="#3f9a4a"/></svg>
        </div>
        <div class="ml-[3px] w-[48px] h-[42px] bg-white border border-t-[#444] border-l-[#444] border-r-white border-b-white flex items-center justify-center">
          <svg class="w-[34px] h-[34px]" viewBox="0 0 34 34"><rect width="34" height="34" fill="#c8343f"/><path d="M12 6H5l4 5-4 5h7" stroke="#f6d5d5" stroke-width="1.500" fill="none"/><text x="21" y="14" font-size="12" fill="#f6d5d5" font-family="Liberation Sans">α</text><path d="M5 26h6v-6h-6zM15 30h5v-12h-5zM24 26h6v-6h-6z" fill="#d8b9b9"/><path d="M2 32L32 20" stroke="#f6d5d5"/></svg>
        </div>

        <div class="ml-[336px] w-[2px] h-[38px] bg-[#aaa7a0] shadow-[1px_0_0_#fff]"></div>
        <div class="ml-[6px] w-[190px] h-[30px] grid grid-cols-8 text-center items-center font-['Liberation_Mono','Noto_Sans_CJK_SC',monospace]">
          <span class="text-[11px] font-bold">CH</span>
          <span class="text-[15px]">中</span>
          <svg class="w-[16px] h-[18px] mx-auto" viewBox="0 0 16 18" fill="#fff" stroke="#222"><path d="M11 1c3 6 0 14-9 14 3 2 8 2 11-2s2-10-2-12z"/></svg>
          <svg class="w-[16px] h-[16px] mx-auto" viewBox="0 0 16 16" fill="none" stroke="#222"><circle cx="5" cy="5" r="2.500"/><path d="M11 8l2 3-3 3"/></svg>
          <svg class="w-[14px] h-[20px] mx-auto" viewBox="0 0 14 20" fill="#fff" stroke="#222"><rect x="4" y="1" width="6" height="11" rx="3"/><path d="M1 9c0 8 12 8 12 0M7 15v4" fill="none"/></svg>
          <svg class="w-[18px] h-[18px] mx-auto" viewBox="0 0 18 18" fill="#fff" stroke="#222"><path d="M1 8h8v9H1z"/><path d="M6 12l8-10 3 3-8 9z"/></svg>
          <svg class="w-[18px] h-[18px] mx-auto" viewBox="0 0 18 18" fill="#fff" stroke="#222"><path d="M2 14l7-7c0-4 3-6 6-4l-3 3 2 2 3-2c1 4-2 6-6 6l-6 5z"/></svg>
          <svg class="w-[18px] h-[18px] mx-auto" viewBox="0 0 18 18" fill="#fff" stroke="#222" stroke-width="1.500"><rect x="1" y="2" width="16" height="15"/><path d="M5 13l8-8M5 13h3" /></svg>
        </div>
        <div class="w-[2px] h-[30px] bg-[#aaa7a0] shadow-[1px_0_0_#fff]"></div>
        <div class="w-[31px] flex justify-center"><div class="w-[19px] h-[24px] bg-[#4c94d8] border-2 border-[#bcd6ee] text-white text-[6px] flex items-center justify-center">iFLY</div></div>
        <div class="w-[2px] h-[30px] bg-[#aaa7a0] shadow-[1px_0_0_#fff]"></div>
        <div class="ml-px w-[24px] flex justify-center"><div class="w-[17px] h-[17px] rounded-full bg-[#16379c] text-white text-[11px] font-bold flex items-center justify-center">?</div></div>
        <svg class="w-[23px] h-[20px]" viewBox="0 0 23 20" fill="#fff" stroke="#222"><rect x="8.500" y="1" width="6" height="11" rx="3"/><path d="M5.500 9c0 8 12 8 12 0M11.500 15v4" fill="none"/></svg>
        <div class="ml-px w-[2px] h-[30px] bg-[#aaa7a0] shadow-[1px_0_0_#fff]"></div>
        <div class="w-[19px] flex flex-col items-center"><svg class="w-[9px] h-[9px]" viewBox="0 0 9 9" fill="none" stroke="#222"><path d="M3 2.500v-2h5.500v4h-2"/><rect x=".5" y="2.500" width="6" height="6"/></svg><span class="mt-[4px] border-x-[3px] border-x-transparent border-t-[4px] border-t-[#222]"></span></div>

        <!-- tray -->
        <div class="w-[333px] h-[40px] flex items-center border border-t-[#888] border-l-[#888] border-r-white border-b-white">
          <svg class="ml-[6px] mr-[6px] w-[8px] h-[9px]" viewBox="0 0 8 9" fill="none" stroke="#222" stroke-width="1.500"><path d="M1 4l3-3 3 3M1 8l3-3 3 3"/></svg>
          <svg class="w-[24px] h-[24px]" viewBox="0 0 24 24"><ellipse cx="11" cy="10" rx="6" ry="8" fill="#111"/><ellipse cx="11" cy="16" rx="7" ry="6" fill="#f7d7c8"/><rect x="5" y="11" width="12" height="3" fill="#d9201f"/><circle cx="17" cy="18" r="5" fill="#f28f4a"/></svg>
          <div class="w-[28px] flex justify-center"><div class="w-[20px] h-[20px] rounded-full bg-[#e8c51d] border-2 border-[#3e9c3e] text-[#2b6d24] text-[13px] font-bold leading-none flex items-center justify-center">+</div></div>
          <svg class="w-[22px] h-[20px]" viewBox="0 0 22 20"><path d="M11 1l7 3c0 8-2 12-7 15-5-3-7-7-7-15z" fill="#8cc65a" stroke="#fff"/></svg>
          <svg class="w-[32px] h-[20px]" viewBox="0 0 32 20" fill="#d4d0c8" stroke="#888"><path d="M8 14h3v4H8zM12 11h3v7h-3zM16 8h3v10h-3zM20 4h3v14h-3z"/></svg>
          <svg class="w-[20px] h-[20px]" viewBox="0 0 20 20" fill="none" stroke="#999"><path d="M8 7v6h-3v-6zM8 7l3-3v12l-3-3M13 7c1 2 1 4 0 6M15 5c2 3 2 7 0 10"/></svg>
          <div class="w-[52px] flex justify-center"><div class="w-[25px] h-[25px] rounded-full bg-[#22b573] border-2 border-[#bdeed4] text-white text-[11px] flex items-center justify-center">55</div></div>
          <div class="w-[60px] text-center font-['Liberation_Mono',monospace] text-[11px] leading-[17px] whitespace-nowrap text-[#222]">8:20<br>2020-04-09</div>
          <svg class="ml-[21px] w-[22px] h-[22px]" viewBox="0 0 22 22"><rect x="2" y="1" width="18" height="20" fill="#f4f4f0" stroke="#aaa"/><path d="M5 5h12M5 8h12M5 11h12M5 14h12M5 17h12" stroke="#bbb"/></svg>
          <div class="ml-[11px] w-[17px] h-[14px] bg-[#2b7fc0] border-b-[3px] border-[#113]"></div>
        </div>
      </div>

      <!-- dialog over the output -->
      <div class="absolute left-[482px] top-[207px] w-[494px] h-[363px] bg-[#d4d0c8] border border-[#444] border-t-[#e8e6e2] border-l-[#e8e6e2] shadow-[inset_-1px_-1px_0_#8a877f] p-[2px]">
        <div class="h-[20px] bg-[linear-gradient(90deg,#0a246a,#a6caf0)] flex items-center pl-[1px] text-white font-bold">
          <svg class="w-[18px] h-[18px]" viewBox="0 0 18 18"><rect x="1" y="2" width="16" height="15" fill="#f3cf9c" stroke="#333"/><path d="M7 1h4v4h4v4h-4v4H7V9H3V5h4z" fill="#2cae32" stroke="#143"/></svg>
          <span class="ml-[2px]">权重估计</span>
          <div class="ml-auto mr-[3px] w-[17px] h-[15px] bg-[#d4d0c8] border border-t-white border-l-white border-r-[#444] border-b-[#444] flex justify-center items-center"><svg class="w-[10px] h-[9px]" viewBox="0 0 10 9" stroke="#000" stroke-width="1.800"><path d="M1 0l8 9M9 0l-8 9"/></svg></div>
        </div>

        <div class="flex h-[256px]">
          <!-- source list -->
          <div class="ml-[12px] mt-[30px] w-[157px] h-[226px] pt-px bg-white border border-[#b9d0dc] font-['Liberation_Mono',monospace] text-[10.500px] text-[#222] whitespace-nowrap">
            <div class="flex items-center h-[19.400px] pl-[3px]"><svg class="w-[17px] h-[17px] mr-[3px]"><use href="#rul"/></svg>x1</div>
            <div class="flex items-center h-[19.400px] pl-[3px] bg-[#0a246a] text-white"><svg class="w-[17px] h-[17px] mr-[3px]"><use href="#rul"/></svg>x2</div>
            <div class="flex items-center h-[19.400px] pl-[3px]"><svg class="w-[17px] h-[17px] mr-[3px]"><use href="#rul"/></svg>y</div>
            <div class="flex items-center h-[19.400px] pl-[3px]"><svg class="w-[17px] h-[17px] mr-[3px]"><use href="#rul"/></svg>Unstandardized Re...</div>
            <div class="flex items-center h-[19.400px] pl-[3px]"><svg class="w-[17px] h-[17px] mr-[3px]"><use href="#rul"/></svg>Standardized Resi...</div>
            <div class="flex items-center h-[19.400px] pl-[3px]"><svg class="w-[17px] h-[17px] mr-[3px]"><use href="#rul"/></svg>Studentized Resid...</div>
            <div class="flex items-center h-[19.400px] pl-[3px]"><svg class="w-[17px] h-[17px] mr-[3px]"><use href="#rul"/></svg>absei</div>
          </div>

          <div class="ml-[10px] w-[295px] pt-[12px] text-[12.500px] text-[#222]">
            <div class="flex pl-[3px]">
              <div class="mt-[5px] w-[35px] h-[32px] bg-[#d4d0c8] border border-t-white border-l-white border-r-[#555] border-b-[#555] flex items-center justify-center"><svg class="w-5 h-5 fill-[#7b7b7b]"><use href="#arw"/></svg></div>
              <div class="ml-[10px] w-[236px]">
                <div class="h-[16px] leading-[16px]">因变量<span class="ml-[2px] font-['Liberation_Mono'] text-[10.500px]">(D):</span></div>
                <div class="h-[21px] pt-[4px] bg-[#bdbdbd] border-2 border-t-[#555] border-l-[#555] border-r-white border-b-white flex items-center font-['Liberation_Mono',monospace] text-[11px]"><svg class="ml-[3px] -mt-[4px] w-[17px] h-[17px] mr-[5px]"><use href="#rul"/></svg>y</div>
              </div>
            </div>
            <div class="mt-[7px] flex pl-[3px]">
              <div class="mt-[26px] w-[35px] h-[32px] bg-[#d4d0c8] border border-t-white border-l-white border-r-[#555] border-b-[#555] flex items-center justify-center"><svg class="w-5 h-5 fill-[#5c5fd6]"><use href="#arw"/></svg></div>
              <div class="ml-[10px] w-[236px]">
                <div class="h-[16px] leading-[16px]">自变量<span class="ml-[2px] font-['Liberation_Mono'] text-[10.500px]">(I):</span></div>
                <div class="h-[53px] pt-[2px] bg-white border-2 border-t-[#555] border-l-[#555] border-r-[#eee] border-b-[#eee] font-['Liberation_Mono',monospace] text-[10.500px]">
                  <div class="flex items-center h-[19px] pl-[3px]"><svg class="w-[17px] h-[17px] mr-[5px]"><use href="#rul"/></svg>x1</div>
                  <div class="flex items-center h-[19px] pl-[3px] bg-[#bdbdbd]"><svg class="w-[17px] h-[17px] mr-[5px]"><use href="#rul"/></svg>x2</div>
                </div>
              </div>
            </div>
            <!-- weight function group -->
            <div class="relative mt-[16px] h-[113px] border border-[#a8a59d] shadow-[inset_1px_1px_0_#fff,1px_1px_0_#fff]">
              <span class="absolute left-[7px] -top-[7px] bg-[#d4d0c8] px-px leading-[14px] whitespace-pre">权重函数是 <span class="font-['Liberation_Mono'] text-[10.500px]">1/</span>(权重变量)<span class="font-['Liberation_Mono'] text-[10.500px]">**</span> 幂</span>
              <div class="flex mt-[17px] pl-[12px]">
                <div class="mt-[5px] w-[34px] h-[32px] bg-[#d4d0c8] border border-t-white border-l-white border-r-[#555] border-b-[#555] flex items-center justify-center"><svg class="w-5 h-5 fill-[#5c5fd6]"><use href="#arw"/></svg></div>
                <div class="ml-[12px] w-[225px]">
                  <div class="h-[16px] leading-[16px]">权重变量<span class="ml-[2px] font-['Liberation_Mono'] text-[10.500px]">(W):</span></div>
                  <div class="h-[20px] bg-white border-2 border-t-[#555] border-l-[#555] border-r-[#eee] border-b-[#eee]"></div>
                </div>
              </div>
              <div class="flex items-center h-[22px] mt-[20px] pl-[16px] whitespace-pre">
                <span class="w-[85px]">幂的范围<span class="ml-[2px] font-['Liberation_Mono'] text-[10.500px]">(N):</span></span>
                <div class="w-[30px] h-[22px] bg-white border-2 border-t-[#555] border-l-[#555] border-r-[#eee] border-b-[#eee] font-['Liberation_Mono',monospace] text-[11.500px] leading-[19px]">-2</div>
                <span class="ml-[6px] w-[46px]">到<span class="ml-[2px] font-['Liberation_Mono'] text-[10.500px]">(T):</span></span>
                <div class="w-[31px] h-[22px] bg-white border-2 border-t-[#555] border-l-[#555] border-r-[#eee] border-b-[#eee] font-['Liberation_Mono',monospace] text-[11.500px] leading-[19px]">2</div>
                <span class="ml-[7px] w-[32px]">按<span class="font-['Liberation_Mono'] text-[10.500px]">:</span></span>
                <div class="w-[30px] h-[22px] bg-white border-2 border-t-[#555] border-l-[#555] border-r-[#eee] border-b-[#eee] font-['Liberation_Mono',monospace] text-[11.500px] leading-[19px]">0.5</div>
              </div>
            </div>
          </div>
        </div>

        <div class="mt-[8px] h-[27px] flex items-center pl-[15px] pr-[70px] text-[12.500px]">
          <svg class="w-[13px] h-[13px]" viewBox="0 0 13 13"><rect x=".5" y=".5" width="12" height="12" fill="#fff" stroke="#666"/><path d="M3 6l3 3 5-6" stroke="#111" stroke-width="1.800" fill="none"/></svg>
          <span class="ml-[5px] whitespace-pre">在等式中包含常量<span class="ml-[2px] font-['Liberation_Mono'] text-[10.500px]">(C)</span></span>
          <div class="ml-auto w-[101px] h-[27px] bg-[#d4d0c8] border border-t-white border-l-white border-r-[#555] border-b-[#555] flex items-center justify-center">选项<span class="ml-[2px] font-['Liberation_Mono'] text-[10.500px]">(O)...</span></div>
        </div>

        <div class="mt-[9px] flex gap-[5px] pl-[28px] text-[13px]">
          <div class="w-[82px] h-[26px] bg-[#d4d0c8] border-2 border-[#333] text-[#9b9890] flex items-center justify-center">确定</div>
          <div class="w-[82px] h-[26px] bg-[#d4d0c8] border border-t-white border-l-white border-r-[#555] border-b-[#555] text-[#9b9890] flex items-center justify-center">粘贴<span class="ml-[2px] font-['Liberation_Mono'] text-[10.500px]">(P)</span></div>
          <div class="w-[82px] h-[26px] bg-[#d4d0c8] border border-t-white border-l-white border-r-[#555] border-b-[#555] flex items-center justify-center">重置<span class="ml-[2px] font-['Liberation_Mono'] text-[10.500px]">(R)</span></div>
          <div class="w-[82px] h-[26px] bg-[#d4d0c8] border border-t-white border-l-white border-r-[#555] border-b-[#555] flex items-center justify-center">取消</div>
          <div class="w-[82px] h-[26px] bg-[#d4d0c8] border border-t-white border-l-white border-r-[#555] border-b-[#555] flex items-center justify-center">帮助</div>
        </div>
      </div>

      <!-- mouse pointer -->
      <svg class="absolute left-[575px] top-[578px] w-[14px] h-[23px]" viewBox="0 0 14 23"><path d="M1 1v17l4-4 3 7 3-1-3-7h5z" fill="#fff" stroke="#111"/></svg>

      <!-- side panel handle -->
      <div class="absolute left-[1436px] top-[378px] w-[27px] h-[68px] bg-[#9a9a9a] rounded-l-[3px] flex items-center justify-center">
        <svg class="w-[12px] h-[20px]" viewBox="0 0 12 20" fill="none" stroke="#fff" stroke-width="2"><path d="M1 1l10 9-10 9"/></svg>
      </div>
    </div>

    <!-- participant thumbnails, cut off at the right -->
    <div class="ml-[8px] mt-[95px] w-[13px] overflow-hidden">
      <div class="h-[89px] bg-[#2a2a2a]"></div>
      <div class="h-[37px] pt-[12px] bg-[#0d0d0d] flex items-center justify-end"><span class="w-[2px] h-[9px] bg-[#7c3a34]"></span></div>
      <div class="h-[126px] border-l-2 border-t-[3px] border-white bg-[#222] flex flex-col">
        <div class="flex-1"></div>
        <div class="h-[36px] pt-[12px] -ml-[2px] border-l-[3px] border-b-2 border-[#666] bg-[#0d0d0d] flex items-center justify-end"><span class="w-[2px] h-[9px] bg-[#7c3a34]"></span></div>
      </div>
      <div class="mt-[2px] h-[126px] border-l-2 border-t-[3px] border-white bg-[#222] flex flex-col">
        <div class="flex-1"></div>
        <div class="h-[36px] pt-[12px] -ml-[2px] border-l-[3px] border-b-2 border-[#666] bg-[#0d0d0d] flex items-center justify-end"><span class="w-[2px] h-[9px] bg-[#7c3a34]"></span></div>
      </div>
      <div class="h-[91px] bg-[#2a2a2a]"></div>
      <div class="h-[36px] bg-[#0d0d0d] text-white text-[14px] leading-[36px] text-right">1</div>
      <div class="mt-[2px] h-[126px] border-l-2 border-t-[3px] border-white bg-[#222] flex flex-col">
        <div class="flex-1"></div>
        <div class="h-[36px] pt-[12px] -ml-[2px] border-l-[3px] border-b-2 border-[#666] bg-[#0d0d0d] flex items-center justify-end"><span class="w-[2px] h-[9px] bg-[#7c3a34]"></span></div>
      </div>
    </div>
  </div>

  <!-- meeting toolbar, cut off at the bottom -->
  <div class="ml-[75px] mt-[17px] w-[1484px] h-[59px] bg-[#f8f8f8] border-t border-[#ccc] flex items-start overflow-hidden">
    <svg class="ml-[351px] mt-[25px] w-[33px] h-[44px] shrink-0" viewBox="0 0 33 44"><rect x="10" y="0" width="14" height="26" rx="7" fill="#5f6166"/><path d="M2 20c0 16 29 16 29 0" fill="none" stroke="#5f6166" stroke-width="3"/><path d="M3 33L33 3" stroke="#ef7058" stroke-width="3"/></svg>
    <div class="ml-[38px] mt-[40px] border-x-[7px] border-x-transparent border-b-[10px] border-b-[#5f6166]"></div>
    <svg class="ml-[52px] mt-[31px] w-[51px] h-[40px] shrink-0" viewBox="0 0 51 40"><rect x="0" y="1" width="36" height="34" rx="2" fill="#5f6166"/><path d="M38 15L51 1v34L38 22z" fill="#5f6166"/><path d="M3 32L36 0" stroke="#ef7058" stroke-width="3"/></svg>
    <div class="ml-[31px] mt-[40px] border-x-[7px] border-x-transparent border-b-[10px] border-b-[#5f6166]"></div>
    <div class="ml-[54px] mt-[27px] w-[48px] h-[44px] shrink-0 bg-[#5b5e65] border-2 border-[#17b27b] rounded-[2px] flex justify-center pt-[7px]">
      <svg class="w-[20px] h-[15px]" viewBox="0 0 20 15"><path d="M0 15c1-6 5-10 11-10V0l9 6-9 6V8c-5 0-8 2-11 7z" fill="#17b27b"/></svg>
    </div>
    <svg class="ml-[77px] mt-[28px] w-[47px] h-[44px] shrink-0" viewBox="0 0 47 44" fill="#5f6166"><circle cx="13" cy="9" r="9"/><path d="M4 18h18l4 20H0z"/><circle cx="35" cy="28" r="12" stroke="#f8f8f8" stroke-width="2"/><path d="M35 21v14M28 28h14" stroke="#fff" stroke-width="3"/></svg>
    <svg class="ml-[87px] mt-[25px] w-[40px] h-[44px] shrink-0" viewBox="0 0 40 44" fill="#5f6166"><path d="M0 16C0 5 7 1 13 1s12 5 12 14c0 5-3 10-5 13l-2 3 6 3H3l3-3-1-3C3 25 0 22 0 16z"/><path d="M28 2c7 2 11 7 10 14-1 5-5 9-6 12l2 3 3 3h-9l-3-4c2-4 5-8 5-14s-1-10-2-14z"/></svg>
    <div class="ml-[104px] mt-[25px] w-[44px] h-[40px] shrink-0 bg-[#5f6166] rounded-[3px] flex justify-center gap-[3px] pt-[18px]"><span class="w-[7px] h-[7px] rounded-full bg-white"></span><span class="w-[7px] h-[7px] rounded-full bg-white"></span><span class="w-[7px] h-[7px] rounded-full bg-white"></span></div>
    <svg class="ml-[107px] mt-[26px] w-[37px] h-[44px] shrink-0" viewBox="0 0 37 44"><path d="M3 0h23l11 11v33H0V3z" fill="#5f6166"/><path d="M27 0l10 11H27z" fill="#f8f8f8" stroke="#5f6166"/><path d="M9 24h19M9 33h19" stroke="#fff" stroke-width="3"/></svg>
    <div class="ml-[87px] mt-[27px] w-[41px] shrink-0 grid grid-cols-2 gap-[3px]">
      <div class="h-[19px] bg-[#5f6166] rounded-[3px]"></div><div class="h-[19px] border border-[#5f6166] rounded-[3px]"></div>
      <div class="h-[19px] bg-[#5f6166] rounded-[3px]"></div><div class="h-[19px] bg-[#5f6166] rounded-[3px]"></div>
    </div>
  </div>
</body>
</html>
